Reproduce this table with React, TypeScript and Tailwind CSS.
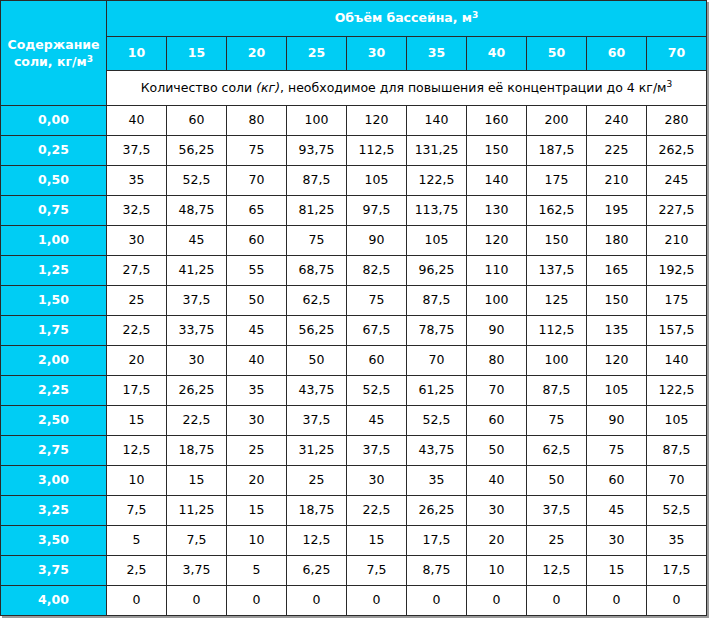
import React from "react";

const volumes = [10, 15, 20, 25, 30, 35, 40, 50, 60, 70];
const levels = Array.from({ length: 17 }, (_, i) => i * 0.25);

const fmt = (n: number) => String(n).replace(".", ",");

const Cube = () => <sup className="text-[9px]">3</sup>;

const App: React.FC = () => {
  return (
    <div
      className="bg-white w-[710px] h-[619px] text-black"
      style={{ fontFamily: "Verdana, 'DejaVu Sans', sans-serif" }}
    >
      <table className="border-collapse table-fixed text-[12.5px] shadow-[2px_2px_0_#9a9a9a]">
        <colgroup>
          <col className="w-[106px]" />
          {volumes.map((v) => (
            <col key={v} className="w-[60px]" />
          ))}
        </colgroup>
        <thead>
          <tr className="h-[36px]">
            <th
              rowSpan={3}
              className="border border-[#2a2a2a] bg-[#00cdf4] text-white font-bold leading-[17px] align-middle"
            >
              Содержание
              <br />
              соли, кг/м<Cube />
            </th>
            <th
              colSpan={10}
              className="border border-[#2a2a2a] bg-[#00cdf4] text-white font-bold"
            >
              Объём бассейна, м<Cube />
            </th>
          </tr>
          <tr className="h-[34px]">
            {volumes.map((v) => (
              <th
                key={v}
                className="border border-[#2a2a2a] bg-[#00cdf4] text-white font-bold"
              >
                {v}
              </th>
            ))}
          </tr>
          <tr className="h-[35px]">
            <th colSpan={10} className="border border-[#2a2a2a] font-normal">
              Количество соли <i>(кг)</i>, необходимое для повышения её концентрации до 4 кг/м
              <Cube />
            </th>
          </tr>
        </thead>
        <tbody>
          {levels.map((c) => (
            <tr key={c} className="h-[30px]">
              <td className="border border-[#2a2a2a] bg-[#00cdf4] text-white font-bold text-center">
                {c.toFixed(2).replace(".", ",")}
              </td>
              {volumes.map((v) => (
                <td key={v} className="border border-[#2a2a2a] text-center">
                  {fmt((4 - c) * v)}
                </td>
              ))}
            </tr>
          ))}
        </tbody>
      </table>
    </div>
  );
};

export default App;
